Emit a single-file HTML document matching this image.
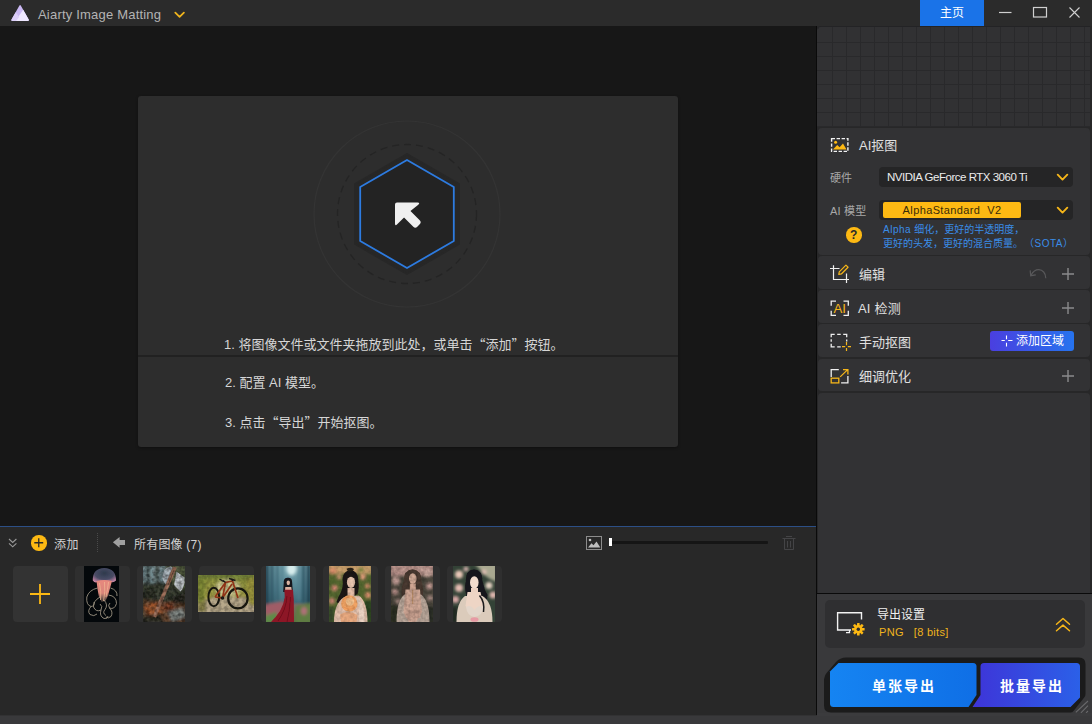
<!DOCTYPE html>
<html lang="zh-CN">
<head>
<meta charset="utf-8">
<title>Aiarty Image Matting</title>
<style>
*{box-sizing:border-box;margin:0;padding:0}
html,body{width:1092px;height:724px;overflow:hidden;background:#171717}
body{position:relative;font-family:"Liberation Sans","Noto Sans CJK SC",sans-serif;font-size:13px;color:#d8d8d8}
.abs{position:absolute}
#titlebar{left:0;top:0;width:1092px;height:26px;background:#2b2b2b}
#title{left:38px;top:7px;font-size:13px;line-height:16px;color:#b4b4b4;letter-spacing:0.2px;white-space:nowrap}
#home{left:920px;top:0;width:64px;height:26px;background:#1a73e8;color:#fff;font-size:12px;line-height:26px;text-align:center}
#canvas{left:0;top:26px;width:817px;height:501px;background:#171717}
#card{left:138px;top:96px;width:540px;height:351px;box-shadow:0 1px 3px rgba(0,0,0,0.35);background:#2d2d2d;border-radius:3px}
#card .div{left:0;top:259px;width:540px;height:2px;background:#212121}
.step{left:86px;white-space:nowrap;font-size:13px;line-height:16px;color:#d6d6d6}
#strip{left:0;top:526px;width:816px;height:190px;background:#282828;border-top:1px solid #2c4f86}
#right{left:816px;top:26px;width:276px;height:690px;background:#272728;border-left:1px solid #0a0a0a}
#statusbar{left:0;top:715px;width:1092px;height:9px;background:#39393b;border-top:1px solid #323233}
.sec{left:818px;width:272px;background:#323234;border-radius:4px}
.sectitle{font-size:13px;color:#e0e0e0;white-space:nowrap;line-height:16px}
.thumb{top:566px;width:55px;height:56px;background:#2f2f2f;border-radius:4px;overflow:hidden}

#grid{left:817px;top:26px;width:273px;height:101px;background-color:#313133;border-radius:4px 0 0 0;border-top:1px solid #232325;
background-image:linear-gradient(#29292b 0,#29292b 1px,transparent 1px),linear-gradient(90deg,#29292b 0,#29292b 1px,transparent 1px);background-size:14px 14px;background-position:1px 1px}
.lbl{font-size:11px;line-height:14px;color:#a8a8a8;white-space:nowrap}
.dd{left:879px;width:194px;height:20.500px;background:#252526;border-radius:4px}
#chip{left:883px;top:202px;width:138px;height:16px;background:#fdb913;border-radius:2px;color:#3a2c08;font-size:11px;line-height:16px;text-align:center;white-space:nowrap;letter-spacing:0.380px}
#help{left:846px;top:227px;width:15.500px;height:15.500px;border-radius:50%;background:#fdb913;color:#2a2a2a;font-size:12px;font-weight:bold;line-height:16px;text-align:center}
.blue{left:883px;font-size:10px;line-height:14px;color:#3a8de8;white-space:nowrap}
#addarea{left:990px;top:331px;width:84px;height:20px;border-radius:3px;background:linear-gradient(90deg,#4a3fe0,#2673ee);color:#fff;font-size:12px;line-height:20px;white-space:nowrap}
#expcard{left:825px;top:600px;width:260px;height:48px;background:#2f2f31;border-radius:5px}
.expbtn{top:663px;height:44px;line-height:46px;text-align:center;color:#fff;font-weight:bold;font-size:14px;letter-spacing:2px;text-indent:2px;white-space:nowrap}
.q{font-family:"Noto Sans CJK SC",sans-serif}
</style>
</head>
<body>
<div id="titlebar" class="abs"></div>
<svg class="abs" style="left:10px;top:4px" width="21" height="19" viewBox="0 0 21 19">
  <path d="M9.300 1.800 Q10.100 0.400 10.900 1.800 L18.700 15.600 Q19.500 17 17.900 17 L2.300 17 Q0.700 17 1.500 15.600 Z" fill="#cbb9f4"/>
  <path d="M13.200 5.800 L18.700 15.600 Q19.500 17 17.900 17 L5.400 17 Z" fill="#eee7ff"/>
  <path d="M5.700 8.200 L9.200 13 L6.100 17 L2.300 17 Q0.700 17 1.500 15.600 Z" fill="#dccff9"/>
</svg>
<div id="title" class="abs">Aiarty Image Matting</div>
<svg class="abs" style="left:173px;top:11px" width="13" height="8" viewBox="0 0 13 8"><path d="M2.3 1.6 L6.6 5.8 L10.9 1.6" fill="none" stroke="#f0b41c" stroke-width="1.8" stroke-linecap="round" stroke-linejoin="round"/></svg>
<div id="home" class="abs">主页</div>
<svg class="abs" style="left:995px;top:0" width="97" height="26" viewBox="0 0 97 26">
  <path d="M4 12.5 H16.5" stroke="#d0d0d0" stroke-width="1.2" fill="none"/>
  <rect x="38.5" y="7.5" width="13" height="9.5" fill="none" stroke="#d0d0d0" stroke-width="1.2"/>
  <path d="M74.5 7.5 L84.5 17.5 M84.5 7.5 L74.5 17.5" stroke="#d0d0d0" stroke-width="1.1" fill="none"/>
</svg>

<div id="canvas" class="abs"></div>
<div id="card" class="abs">
  <div class="div abs"></div>
  <svg class="abs" style="left:169px;top:18px" width="200" height="200" viewBox="-100 -100 200 200">
    <circle r="93" fill="none" stroke="#343434" stroke-width="1.2"/>
    <circle r="69.5" fill="none" stroke="#242424" stroke-width="1.3" stroke-dasharray="7 5"/>
    <polygon points="0,-60 52,-30 52,30 0,60 -52,30 -52,-30" fill="#272727" stroke="#272727" stroke-width="2" stroke-linejoin="round"/>
    <polygon points="0,-54 46.8,-27 46.8,27 0,54 -46.8,27 -46.8,-27" fill="#232323" stroke="#2d7be0" stroke-width="1.8" stroke-linejoin="round"/>
    <path d="M-10 -11.500 L10.500 -11.500 Q13.500 -11.500 11.300 -9.300 L3.450 -2.950 L12.700 6.300 Q14.700 8.300 12.700 10.300 L10.300 12.700 Q8.300 14.700 6.300 12.700 L-2.950 3.450 L-9.800 10.300 Q-12 12.500 -12 9.500 L-12 -9.500 Q-12 -11.500 -10 -11.500 Z" fill="#f0f0f0"/>
  </svg>
  <div class="step abs" style="top:240px">1. 将图像文件或文件夹拖放到此处，或单击<span class="q">“</span>添加<span class="q">”</span>按钮。</div>
  <div class="step abs" style="top:279px;left:87px">2. 配置 AI 模型。</div>
  <div class="step abs" style="top:318px;left:87px">3. 点击<span class="q">“</span>导出<span class="q">”</span>开始抠图。</div>
</div>

<div id="strip" class="abs"></div>
<div id="right" class="abs"></div>


<!-- STRIP -->
<svg class="abs" style="left:7px;top:537px" width="12" height="12" viewBox="0 0 12 12"><path d="M2 2 L5.700 5.500 L9.400 2 M2 6.300 L5.700 9.800 L9.400 6.300" fill="none" stroke="#9a9a9a" stroke-width="1.100"/></svg>
<div class="abs" style="left:31px;top:535px;width:15.500px;height:15.500px;border-radius:50%;background:#fdb913"></div>
<svg class="abs" style="left:31px;top:535px" width="16" height="16" viewBox="0 0 16 16"><path d="M7.750 3.300 V12.200 M3.300 7.750 H12.200" stroke="#2a2a2a" stroke-width="1.300"/></svg>
<div class="abs" style="left:54px;top:538px;font-size:12px;line-height:15px;color:#d2d2d2;white-space:nowrap;letter-spacing:0.5px">添加</div>
<div class="abs" style="left:97px;top:533px;width:0;height:19px;border-left:1px dotted #4a4a4a"></div>
<svg class="abs" style="left:112px;top:536px" width="15" height="13" viewBox="0 0 15 13"><path d="M0.900 6.300 L7.600 0.900 V3.900 H13 V8.900 H7.600 V11.700 Z" fill="#a0a0a0"/></svg>
<div class="abs" style="left:134px;top:538px;font-size:12px;line-height:15px;color:#d2d2d2;white-space:nowrap;letter-spacing:0.2px">所有图像 (7)</div>
<svg class="abs" style="left:585px;top:535px" width="18" height="16" viewBox="0 0 18 16">
  <rect x="1.500" y="1.500" width="15" height="13" fill="none" stroke="#8c8c8c" stroke-width="1"/>
  <circle cx="5" cy="5" r="1.300" fill="#bdbdbd"/>
  <path d="M3 12.500 L6.500 8.200 L8.500 10.300 L11.500 6.500 L15.300 12.500 Z" fill="#bdbdbd"/>
</svg>
<div class="abs" style="left:611px;top:541px;width:157px;height:3px;background:#151515;border-radius:1px"></div>
<div class="abs" style="left:609px;top:538px;width:3px;height:8px;background:#fff"></div>
<svg class="abs" style="left:781px;top:534px" width="16" height="18" viewBox="0 0 16 18"><path d="M1.500 4.500 H14.500 M5 2.500 H11 M3.500 4.500 V15.500 H12.500 V4.500 M6.500 7 V13.500 M9.500 7 V13.500" fill="none" stroke="#444446" stroke-width="1"/></svg>

<div class="thumb abs" style="left:13px;background:#333"></div>
<svg class="abs" style="left:29px;top:583px" width="22" height="22" viewBox="0 0 22 22"><path d="M11 1 V21 M1 11 H21" stroke="#fdb913" stroke-width="1.800"/></svg>
<div class="thumb abs" style="left:75px"></div>
<div class="thumb abs" style="left:137px"></div>
<div class="thumb abs" style="left:199px"></div>
<div class="thumb abs" style="left:261px"></div>
<div class="thumb abs" style="left:323px"></div>
<div class="thumb abs" style="left:385px"></div>
<div class="thumb abs" style="left:447px"></div>

<svg class="abs" style="left:0;top:560px" width="520" height="70" viewBox="0 560 520 70">
<defs>
  <filter id="bl05" x="-20%" y="-20%" width="140%" height="140%"><feGaussianBlur stdDeviation="0.450"/></filter>
  <filter id="bl1" x="-20%" y="-20%" width="140%" height="140%"><feGaussianBlur stdDeviation="0.800"/></filter>
  <filter id="bl2" x="-20%" y="-20%" width="140%" height="140%"><feGaussianBlur stdDeviation="1.500"/></filter>
  <filter id="bl3" x="-20%" y="-20%" width="140%" height="140%"><feGaussianBlur stdDeviation="2.600"/></filter>
  <filter id="nz" x="0" y="0" width="100%" height="100%">
    <feTurbulence type="fractalNoise" baseFrequency="0.280" numOctaves="2" seed="7" result="t"/>
    <feColorMatrix in="t" type="matrix" values="0 0 0 0 0  0 0 0 0 0  0 0 0 0 0  1.600 1.600 0 0 -1.150"/>
  </filter>
  <filter id="nzw" x="0" y="0" width="100%" height="100%">
    <feTurbulence type="fractalNoise" baseFrequency="0.300" numOctaves="2" seed="3" result="t"/>
    <feColorMatrix in="t" type="matrix" values="0 0 0 0 1  0 0 0 0 0.900  0 0 0 0 0.800  0 1.800 1.800 0 -1.450"/>
  </filter>
  <clipPath id="c1"><rect x="84" y="566" width="35" height="56"/></clipPath>
  <clipPath id="c2"><rect x="143" y="566" width="42" height="56"/></clipPath>
  <clipPath id="c3"><rect x="198" y="575" width="56" height="37"/></clipPath>
  <clipPath id="c4"><rect x="266" y="566" width="44" height="56"/></clipPath>
  <clipPath id="c5"><rect x="329" y="566" width="42" height="56"/></clipPath>
  <clipPath id="c6"><rect x="391" y="566" width="42" height="56"/></clipPath>
  <clipPath id="c7"><rect x="453" y="566" width="42" height="56"/></clipPath>
  <radialGradient id="jg" cx="0.5" cy="0.350" r="0.750"><stop offset="0" stop-color="#2e3a4c"/><stop offset="0.550" stop-color="#4a4c66"/><stop offset="0.850" stop-color="#b27a9a"/><stop offset="1" stop-color="#e79ab4"/></radialGradient>
  <linearGradient id="jb" x1="0" y1="0" x2="0" y2="1"><stop offset="0" stop-color="#e8897e"/><stop offset="0.600" stop-color="#d9857a"/><stop offset="1" stop-color="#b89a88" stop-opacity="0.300"/></linearGradient>
  <linearGradient id="f4" x1="0" y1="0" x2="0" y2="1"><stop offset="0" stop-color="#7aa8b2"/><stop offset="0.450" stop-color="#4f7f8e"/><stop offset="0.640" stop-color="#3f6c79"/><stop offset="0.700" stop-color="#7a6a66"/><stop offset="1" stop-color="#55733e"/></linearGradient>
  <linearGradient id="f3" x1="0" y1="0" x2="0" y2="1"><stop offset="0" stop-color="#8e983e"/><stop offset="0.600" stop-color="#a6a048"/><stop offset="0.700" stop-color="#b4a57c"/><stop offset="1" stop-color="#b9a98a"/></linearGradient>
</defs>
<!-- 1 jellyfish -->
<g clip-path="url(#c1)">
  <rect x="84" y="566" width="35" height="56" fill="#04080b"/>
  <g filter="url(#bl05)">
    <path d="M92.800 580.500 Q92.500 568.300 104.300 568 Q116 568.300 116 580.500 Q113 583.500 110 581.500 Q107 584 104 581.800 Q100.500 584 98 581.800 Q95 583.500 92.800 580.500 Z" fill="url(#jg)"/>
    <path d="M96.500 581 Q104 579 112 581 L109.500 590 Q108 597 105.500 601 L101.500 602 Q98 596 97.500 589 Z" fill="url(#jb)"/>
    <path d="M99.500 583 Q101.500 592 100.500 600 M104.500 582 Q105.500 592 103.500 601 M108.500 582 Q107.500 590 106 597" stroke="#f2b892" stroke-width="0.900" fill="none" opacity="0.800"/>
    <g stroke="#cdbfa8" fill="none" stroke-width="0.900" opacity="0.750">
      <path d="M97.500 588 Q89 590 86.800 597 Q86 605 91 606.500 Q95 606 94 602"/>
      <path d="M91 606.500 Q87 611 90 614.500 Q94 617 97 614"/>
      <path d="M100 597 Q93 601 93.500 607 Q96 612.500 101 610 Q103 606 100 604"/>
      <path d="M101 610 Q99 616 104 618.500 Q108 619 108 616"/>
      <path d="M104 600 Q108.500 605 105 609.500 Q102 613 106 615.500"/>
      <path d="M108.500 595 Q116.500 596 116.500 603.500 Q114.500 610 109.500 608 Q107.500 605 110 603"/>
      <path d="M109.500 608 Q113.500 612 111 616.500 Q108 619 106 617"/>
      <path d="M110.500 588 Q117.500 590 117 596"/>
    </g>
  </g>
</g>
<!-- 2 axe forest -->
<g clip-path="url(#c2)">
  <rect x="143" y="566" width="42" height="56" fill="#30352a"/>
  <g filter="url(#bl2)">
    <rect x="141" y="564" width="24" height="19" fill="#768f94"/>
    <rect x="146.500" y="564" width="3" height="22" fill="#33423f"/>
    <rect x="155" y="564" width="4" height="17" fill="#3f4a42"/>
    <path d="M166 564 L186 564 L186 590 L172 585 Z" fill="#4c5438"/>
    <path d="M143 586 L160 581 L172 592 L186 588 L186 604 L143 600 Z" fill="#31382a"/>
    <path d="M171 597 L186 593 L186 611 L174 611 Z" fill="#1d1f19"/>
    <path d="M143 590 L154 588 L158 598 L143 600 Z" fill="#23281e"/>
    
    <path d="M143 600 L186 604 L186 623 L143 623 Z" fill="#5e3d28"/>
    <path d="M143 606 L157 602 L164 611 L150 617 Z" fill="#a1542c"/>
    <path d="M162 604 L172 602 L174 609 L165 611 Z" fill="#7a3a22"/>
    <path d="M168 612 L183 608 L186 617 L172 622 Z" fill="#7d8582"/>
    <path d="M143 616 L160 614 L164 623 L143 623 Z" fill="#25281f"/>
  </g>
  <g filter="url(#bl05)">
    <path d="M162.500 576 Q163.500 568 170.500 566.300 L173.500 568 L167.500 585.500 Q162 582 162.500 576 Z" fill="#a9b4bc"/>
    <path d="M176.500 571.500 L184.500 577.500 Q185.500 586 180.500 591.500 L174 585 Z" fill="#c6ccd1"/>
    <path d="M173 566.500 L176.800 567.800 L156 617.500 L152.500 616.500 Z" fill="#9c6c56"/>
    <path d="M174 570 L168 585" stroke="#5a3d30" stroke-width="0.800"/>
  </g>
  <rect x="143" y="566" width="42" height="56" filter="url(#nz)" opacity="0.450"/>
  <rect x="143" y="566" width="42" height="56" filter="url(#nzw)" opacity="0.100"/>
</g>
<!-- 3 bike -->
<g clip-path="url(#c3)">
  <rect x="198" y="575" width="56" height="37" fill="url(#f3)"/>
  <g filter="url(#bl2)">
    <ellipse cx="228" cy="588" rx="13" ry="9" fill="#cbc68e"/>
    <rect x="197" y="575" width="8" height="28" fill="#7f8a36"/>
    <rect x="247" y="575" width="9" height="30" fill="#9c963c"/>
    <path d="M198 609 L213 597 L245 597 L256 613 L198 614 Z" fill="#b7a88a"/>
    <path d="M198 574 H254 V578.500 H198 Z" fill="#76853a"/>
    <path d="M198 604 L206 598 L206 612 L198 612 Z" fill="#8a8448"/>
  </g>
  <rect x="198" y="575" width="56" height="37" filter="url(#nz)" opacity="0.250"/>
  <g filter="url(#bl05)" fill="none">
    <ellipse cx="213.800" cy="597" rx="5.400" ry="9.300" stroke="#15140f" stroke-width="2"/>
    <ellipse cx="237.900" cy="598.400" rx="9.700" ry="10" stroke="#15140f" stroke-width="2.200"/>
    <path d="M215 597 L225.500 582.500 L232.500 581 L238 598 M225.500 582.500 L222.500 598 L215 597 M222.500 598 L232 584" stroke="#8f3319" stroke-width="1.700"/>
    <path d="M229 578.500 L235.500 580.500 M232.500 581 L231.800 578.500 M219.500 579 L223.500 581.500 M225.500 582.500 L223 580.500" stroke="#1c1a15" stroke-width="1.400"/>
    <circle cx="222.500" cy="598" r="1.800" fill="#1c1a15" stroke="none"/>
  </g>
</g>
<!-- 4 red dress -->
<g clip-path="url(#c4)">
  <rect x="266" y="566" width="44" height="56" fill="url(#f4)"/>
  <g filter="url(#bl2)">
    <ellipse cx="291.500" cy="569" rx="5" ry="6.500" fill="#d6ecec"/>
    <rect x="265" y="564" width="3.500" height="41" fill="#1f3a48"/>
    <rect x="270.500" y="564" width="3" height="39" fill="#2c4f5f"/>
    <rect x="276" y="564" width="2.500" height="37" fill="#38606f"/>
    <rect x="281" y="564" width="2" height="36" fill="#4f7d8c"/>
    <rect x="298" y="564" width="2" height="36" fill="#4f7d8c"/>
    <rect x="302" y="564" width="3" height="39" fill="#2c4f5f"/>
    <rect x="307" y="564" width="3.500" height="41" fill="#1f3a48"/>
    <path d="M265 605 L284 601 L284 623 L265 623 Z" fill="#a05c66"/>
    <path d="M296 606 L311 603 L311 623 L296 623 Z" fill="#5f7d42"/>
    <ellipse cx="304" cy="611" rx="3" ry="4" fill="#b06f78"/>
    <path d="M265 616 L276 612 L280 623 L265 623 Z" fill="#5f8a4a"/>
  </g>
  <g filter="url(#bl05)">
    <path d="M283.800 581 Q284.500 577.500 288 577.800 Q291.500 577.500 292 581 L292.800 591.500 L283.200 592 Z" fill="#14151a"/>
    <ellipse cx="288.300" cy="582.800" rx="1.700" ry="2.400" fill="#dbb4a2"/>
    <path d="M285.300 587 L291.300 587 L291.800 590.500 L285 590.500 Z" fill="#dbb09e"/>
    <path d="M284.300 589.800 L293 589.800 L293.800 600 L294 622 L271 622 Q276 617 280 611 Q284 604 284.800 597 Z" fill="#8d1525"/>
    <path d="M287 596 Q286 610 278 621 M290.500 597 Q290 610 287 622" stroke="#6d0f1c" stroke-width="0.900" fill="none"/>
  </g>
</g>
<!-- 5 orange flower girl -->
<g clip-path="url(#c5)">
  <rect x="329" y="566" width="42" height="56" fill="#54682f"/>
  <g filter="url(#bl2)">
    <rect x="328" y="563" width="44" height="11" fill="#caa06c"/>
    <circle cx="333" cy="571" r="3.500" fill="#e2946e"/>
    <circle cx="339" cy="577" r="2.500" fill="#dca07a"/>
    <circle cx="334.500" cy="588" r="3" fill="#e28c7a"/>
    <circle cx="363" cy="577" r="3" fill="#e29c7c"/>
    <circle cx="367.500" cy="586" r="2.500" fill="#d98a6c"/>
    <circle cx="368" cy="595" r="3" fill="#e49272"/>
    <circle cx="332" cy="601" r="3" fill="#da8c7c"/>
    <rect x="364" y="601" width="8" height="22" fill="#2c4222"/>
    <rect x="328" y="607" width="6" height="16" fill="#36482a"/>
    <circle cx="361" cy="570" r="2.500" fill="#7c8a3c"/>
  </g>
  <g filter="url(#bl05)">
    <path d="M342.500 579 Q343 570.800 350.500 570.300 Q358 570.800 358.300 580 Q359.500 588 357.500 594 L347 600 L342 604 Q338.500 604.500 336.500 602 Q338 597 340.500 593 Q343.500 587 342.500 579 Z" fill="#1c1715"/>
    <path d="M346.500 568.800 Q350.500 566.800 354 569 L352.500 571.500 L348 571.500 Z" fill="#2c2119"/>
    <ellipse cx="351" cy="582.300" rx="4.100" ry="5.600" fill="#edc8b2"/>
    <path d="M347.500 588 H354.500 V596 H347.500 Z" fill="#e6bea8"/>
    <path d="M334 622 Q334 604 343.500 597.500 L358.500 595.500 Q367.500 601 367.500 622 Z" fill="#e6c3ae"/>
    <path d="M358 597 Q365 603 364.500 622 L359 622 Q360 608 356 600 Z" fill="#efd6c6"/>
    <circle cx="349.300" cy="603.500" r="8.200" fill="#f1a364"/>
    <circle cx="350" cy="601.500" r="4.200" fill="#f8c48e"/>
    <path d="M342.500 600 Q346 596 350.500 598 M344 607 Q349 611 355 607.500" stroke="#e2894c" stroke-width="0.800" fill="none"/>
    <path d="M340 614.500 Q349 609.500 357.500 615 L356.500 622 L341 622 Z" fill="#eaaa80"/>
  </g>
  <rect x="329" y="566" width="42" height="56" filter="url(#nz)" opacity="0.150"/>
</g>
<!-- 6 rose garden -->
<g clip-path="url(#c6)">
  <rect x="391" y="566" width="42" height="56" fill="#4a463c"/>
  <g filter="url(#bl2)">
    <rect x="390" y="563" width="44" height="13" fill="#b8928a"/>
    <circle cx="396" cy="581" r="4" fill="#cba49c"/>
    <circle cx="395" cy="592" r="3" fill="#bc928c"/>
    <circle cx="398" cy="601" r="2.500" fill="#a88a82"/>
    <circle cx="428" cy="573" r="4" fill="#d4b0a6"/>
    <circle cx="429.500" cy="586" r="3.500" fill="#c69e96"/>
    <circle cx="430" cy="598" r="3" fill="#ac8e86"/>
    <circle cx="404" cy="571" r="3" fill="#c8a098"/>
    <circle cx="421" cy="569" r="3" fill="#c9a59c"/>
    <rect x="390" y="605" width="8" height="18" fill="#292d23"/>
    <rect x="426" y="607" width="8" height="16" fill="#2c2f25"/>
  </g>
  <g filter="url(#bl05)">
    <path d="M403.800 581 Q403.500 570 412.500 569.300 Q421.500 570 421.500 581 Q424.500 590 422 599.500 L402.500 599.500 Q400 590 403.800 581 Z" fill="#4b3a30"/>
    <ellipse cx="412.800" cy="578.500" rx="3.800" ry="5.200" fill="#d6ae9a"/>
    <path d="M409.800 583.500 H415.800 V590 H409.800 Z" fill="#cfa592"/>
    <path d="M396.500 622 Q396.500 601 404.500 594.500 L421 594.500 Q429.500 601 429.500 622 Z" fill="#bdaa9d"/>
    <path d="M405.500 589.500 L420 589.500 L422 612 L416 622 L409 622 L403.500 612 Z" fill="#d0a896"/>
    <path d="M412.700 590 V604" stroke="#b88a5c" stroke-width="0.900"/>
    <path d="M404 612 Q412.500 607 421.500 612 L420 618 L406 618 Z" fill="#c79f8e"/>
  </g>
  <rect x="391" y="566" width="42" height="56" filter="url(#nz)" opacity="0.200"/>
</g>
<!-- 7 white flowers -->
<g clip-path="url(#c7)">
  <rect x="453" y="566" width="42" height="56" fill="#334236"/>
  <g filter="url(#bl2)">
    <path d="M474 563 H497 V582 Q487 579 481 571 Z" fill="#a9a890"/>
    <circle cx="459" cy="574.500" r="4" fill="#eac8b8"/>
    <circle cx="466" cy="569" r="2.500" fill="#d8b4b0"/>
    <circle cx="459" cy="588" r="4" fill="#e4bcb2"/>
    <circle cx="455.500" cy="599.500" r="3.500" fill="#dbaaa8"/>
    <circle cx="489" cy="585.500" r="3.500" fill="#e6d2c2"/>
    <circle cx="493" cy="595" r="3.500" fill="#e2b8b0"/>
    <circle cx="484" cy="572" r="2.500" fill="#e0c0b4"/>
    <rect x="452" y="607" width="5" height="16" fill="#1c281e"/>
  </g>
  <g filter="url(#bl05)">
    <path d="M465.800 581 Q465.500 570 474 569.300 Q482.500 570 482.500 581 Q484 589 487.500 595 Q487 603 484 606.500 L466.500 596 Q464 588 465.800 581 Z" fill="#16151b"/>
    <ellipse cx="474.300" cy="582.500" rx="4.300" ry="6.200" fill="#f2dccd"/>
    <path d="M471 588 H478 V597 H471 Z" fill="#ecd2c2"/>
    <path d="M456.500 622 Q456.500 602 465 596 L482.500 596 Q492.500 602 492.500 622 Z" fill="#dbcbbb"/>
    <path d="M467.500 592 L480.500 592 L484 608 L474.500 615 L465.500 606 Z" fill="#eed5c5"/>
    <path d="M466 607 Q470.500 604 474.500 610 Q478.500 604 484 607 Q482 616 474.500 617 Q467 616 466 607 Z" fill="#e3d6ca"/>
    <path d="M479.500 595.500 Q485 602 483.500 612" stroke="#1b1a1e" stroke-width="1.500" fill="none"/>
    <ellipse cx="474.500" cy="619.500" rx="4" ry="2.300" fill="#e79aa4"/>
  </g>
</g>
</svg>

<!-- RIGHT PANEL -->
<div id="grid" class="abs"></div>
<div class="abs" style="left:818px;top:29px;width:1px;height:98px;background-color:#313133;background-image:linear-gradient(#29292b 0,#29292b 1px,transparent 1px);background-size:1px 14px;background-position:0 13px"></div>
<div class="abs" style="left:818px;top:28px;width:272px;height:1px;background-color:#313133;background-image:linear-gradient(90deg,#29292b 0,#29292b 1px,transparent 1px);background-size:14px 1px;background-position:0 0"></div>
<div class="sec abs" style="top:128px;height:127px"></div>
<svg class="abs" style="left:830px;top:137px" width="20" height="16" viewBox="0 0 20 16">
  <rect x="1.600" y="1.600" width="16.300" height="12.800" fill="none" stroke="#f2f2f2" stroke-width="1.400" stroke-dasharray="3.400 1.600"/>
  <circle cx="5.600" cy="5.200" r="1.500" fill="#fdb913"/>
  <path d="M3 12.600 L7.200 8 L9.600 10.200 L13 6.400 L16.500 12.600 Z" fill="#fdb913"/>
</svg>
<div class="sectitle abs" style="left:859px;top:138px">AI抠图</div>
<div class="lbl abs" style="left:830px;top:171px">硬件</div>
<div class="dd abs" style="top:166.500px"></div>
<div class="abs" style="left:887px;top:170px;font-size:11.500px;line-height:14px;color:#ececec;white-space:nowrap;letter-spacing:-0.480px" id="gpu">NVIDIA GeForce RTX 3060 Ti</div>
<svg class="abs chev" style="left:1056px;top:173px" width="13" height="9" viewBox="0 0 13 9"><path d="M1.700 1.700 L6.500 6.600 L11.300 1.700" fill="none" stroke="#f6b619" stroke-width="1.900" stroke-linecap="round" stroke-linejoin="round"/></svg>
<div class="lbl abs" style="left:830px;top:204px;letter-spacing:0.2px">AI 模型</div>
<div class="dd abs" style="top:199.500px"></div>
<div class="abs" id="chip">AlphaStandard&nbsp; V2</div>
<svg class="abs chev" style="left:1056px;top:206px" width="13" height="9" viewBox="0 0 13 9"><path d="M1.700 1.700 L6.500 6.600 L11.300 1.700" fill="none" stroke="#f6b619" stroke-width="1.900" stroke-linecap="round" stroke-linejoin="round"/></svg>
<div class="abs" id="help">?</div>
<div class="abs blue" style="top:223px"><span style="letter-spacing:0.500px">Alpha </span>细化，更好的半透明度，</div>
<div class="abs blue" style="top:237px">更好的头发，更好的混合质量。<span style="margin-left:6px;letter-spacing:0.500px">（SOTA）</span></div>

<div class="sec abs" style="top:256px;height:33px"></div>
<svg class="abs" style="left:829px;top:263px" width="22" height="22" viewBox="0 0 22 22">
  <path d="M1 5.500 H10.500 M4.500 2.200 V16.500 H20 M17.500 10.500 V20" fill="none" stroke="#f0f0f0" stroke-width="1.200"/>
  <path d="M9.800 11.400 L10.240 8.840 L16.940 2.140 L19.060 4.260 L12.360 10.960 Z" fill="#323234" stroke="#f6b619" stroke-width="1.200" stroke-linejoin="round"/>
</svg>
<div class="sectitle abs" style="left:859px;top:267px">编辑</div>
<svg class="abs" style="left:1028px;top:265px" width="20" height="16" viewBox="0 0 20 16"><path d="M17.800 13.200 C17.800 8 14.500 4.700 10.800 4.700 C7.500 4.700 4.800 6.800 3 10.200" fill="none" stroke="#58585a" stroke-width="1.200"/><path d="M2.200 5.400 L2.700 10.700 L7.800 9.800" fill="none" stroke="#58585a" stroke-width="1.200"/></svg>
<svg class="abs plus" style="left:1061px;top:267px" width="14" height="14" viewBox="0 0 14 14"><path d="M7 1 V13 M1 7 H13" stroke="#8a8a8c" stroke-width="1.400"/></svg>

<div class="sec abs" style="top:290px;height:33px"></div>
<svg class="abs" style="left:830px;top:300px" width="20" height="17" viewBox="0 0 20 17">
  <path d="M6 1.200 H1.200 V5.800 M1.200 10.700 V15.300 H6 M13.500 1.200 H18.300 V5.800 M18.300 10.700 V15.300 H13.500" fill="none" stroke="#f0f0f0" stroke-width="1.300"/>
  <text x="3.400" y="12.700" font-family="Liberation Sans, sans-serif" font-size="12" fill="#f6b619" textLength="12.500" lengthAdjust="spacingAndGlyphs">AI</text>
</svg>
<div class="sectitle abs" style="left:858px;top:301px;letter-spacing:0.2px">AI 检测</div>
<svg class="abs plus" style="left:1061px;top:301px" width="14" height="14" viewBox="0 0 14 14"><path d="M7 1 V13 M1 7 H13" stroke="#8a8a8c" stroke-width="1.400"/></svg>

<div class="sec abs" style="top:324px;height:33px"></div>
<svg class="abs" style="left:830px;top:333px" width="22" height="20" viewBox="0 0 22 20">
  <path d="M1.200 4.300 V1.300 H4.700 M7.200 1.300 H10.700 M13.200 1.300 H16.700 V4.300 M16.700 6.600 V8.600 M1.200 6.300 V8.800 M1.200 10.800 V13.800 H4.700 M7.200 13.800 H10.700" fill="none" stroke="#f0f0f0" stroke-width="1.300"/>
  <path d="M16.500 9.100 V12.300 M16.500 14.900 V18.100 M12 13.600 H15.200 M17.800 13.600 H21" stroke="#f6b619" stroke-width="1.200"/>
</svg>
<div class="sectitle abs" style="left:859px;top:335px">手动抠图</div>
<div class="abs" id="addarea"><svg width="12" height="12" viewBox="0 0 12 12" style="position:absolute;left:11px;top:4px"><path d="M5.500 0.500 V4.300 M5.500 7.700 V11.500 M0.500 5.500 H3.800 M7.200 5.500 H11.500" stroke="#fff" stroke-width="1.100"/></svg><span style="position:absolute;left:26px;top:0">添加区域</span></div>

<div class="sec abs" style="top:359px;height:32px"></div>
<svg class="abs" style="left:830px;top:367px" width="20" height="18" viewBox="0 0 20 18">
  <path d="M8.800 2.700 H1.200 V9.900 M17.900 8.900 V15.900 H11.100" fill="none" stroke="#f0f0f0" stroke-width="1.300"/>
  <rect x="1.200" y="11.200" width="7.600" height="4.700" fill="none" stroke="#f6b619" stroke-width="1.300"/>
  <path d="M10.200 9.900 L17.400 2.900 M13 2.600 H17.900 V7.400" fill="none" stroke="#f6b619" stroke-width="1.300"/>
</svg>
<div class="sectitle abs" style="left:859px;top:369px">细调优化</div>
<svg class="abs plus" style="left:1061px;top:369px" width="14" height="14" viewBox="0 0 14 14"><path d="M7 1 V13 M1 7 H13" stroke="#8a8a8c" stroke-width="1.400"/></svg>

<div class="sec abs" style="top:393px;height:200px;border-radius:4px 4px 0 0"></div>
<div class="abs" style="left:817px;top:593px;width:275px;height:1px;background:#0a0a0a"></div>
<div class="abs" style="left:817px;top:594px;width:275px;height:122px;background:#39393b"></div>
<div class="abs" id="expcard"></div>
<svg class="abs" style="left:835px;top:610px" width="32" height="28" viewBox="0 0 32 28">
  <path d="M16 20 H2.600 V2.700 H26.500 V9.500" fill="none" stroke="#f2f2f2" stroke-width="1.400"/>
  <path d="M14.500 20 V22.700 H11" fill="none" stroke="#f2f2f2" stroke-width="1.300"/>
  <g transform="translate(23.300,19.200)" fill="#fdb913">
    <circle r="4.300"/>
    <g><rect x="-1.300" y="-6.300" width="2.600" height="12.600" rx="0.500"/><rect x="-1.300" y="-6.300" width="2.600" height="12.600" rx="0.500" transform="rotate(45)"/><rect x="-1.300" y="-6.300" width="2.600" height="12.600" rx="0.500" transform="rotate(90)"/><rect x="-1.300" y="-6.300" width="2.600" height="12.600" rx="0.500" transform="rotate(135)"/></g>
    <circle r="1.700" fill="#2f2f31"/>
  </g>
</svg>
<div class="abs" style="left:877px;top:608px;font-size:12px;line-height:15px;color:#f0f0f0;white-space:nowrap">导出设置</div>
<div class="abs" style="left:879px;top:625px;font-size:11px;line-height:14px;color:#f0b41c;white-space:nowrap;letter-spacing:0.3px">PNG&nbsp;&nbsp; [8 bits]</div>
<svg class="abs" style="left:1054px;top:616px" width="18" height="18" viewBox="0 0 18 18"><path d="M2.500 8.200 L9 2.500 L15.500 8.200 M2.500 14.800 L9 9.100 L15.500 14.800" fill="none" stroke="#f6b619" stroke-width="1.500" stroke-linecap="round" stroke-linejoin="round"/></svg>

<svg class="abs" style="left:817px;top:655px" width="275" height="60" viewBox="0 0 275 60">
  <defs>
    <linearGradient id="b1" x1="0" y1="0" x2="1" y2="0"><stop offset="0" stop-color="#1584f2"/><stop offset="1" stop-color="#0f6fe6"/></linearGradient>
    <linearGradient id="b2" x1="0" y1="0" x2="1" y2="0"><stop offset="0" stop-color="#3e34d8"/><stop offset="1" stop-color="#2b60e8"/></linearGradient>
  </defs>
  <path d="M14 57.500 Q7 57.500 7 50.500 V26 Q7 21 10 17.500 L19 7 Q23 2.500 29 2.500 H262 Q268.500 2.500 268.500 9 V39 Q268.500 41 267.200 42.600 L256.500 56 Q255.300 57.500 253.300 57.500 Z" fill="#1b1b1b"/>
  <path d="M13 16.500 L21.500 8 H156 Q159.500 8 159.500 11.500 V40 L151.500 52 H16.500 Q13 52 13 48.500 Z" fill="url(#b1)"/>
  <path d="M163.500 11.500 Q163.500 8 167 8 H259.500 Q263 8 263 11.500 V42.500 L253.500 52 H155.500 L163.500 40 Z" fill="url(#b2)"/>
  <path d="M258.800 57.300 L271 46 M263.900 57.800 L271 50.700 M269 57.800 L271 56" stroke="#69696b" stroke-width="1.100"/>
</svg>
<div class="abs expbtn" style="left:830px;width:146px">单张导出</div>
<div class="abs expbtn" style="left:981px;width:100px">批量导出</div>
<div id="statusbar" class="abs"></div>
<div class="abs" style="left:817px;top:713px;width:275px;height:3px;background:#3b3b3d"></div>
</body>
</html>
